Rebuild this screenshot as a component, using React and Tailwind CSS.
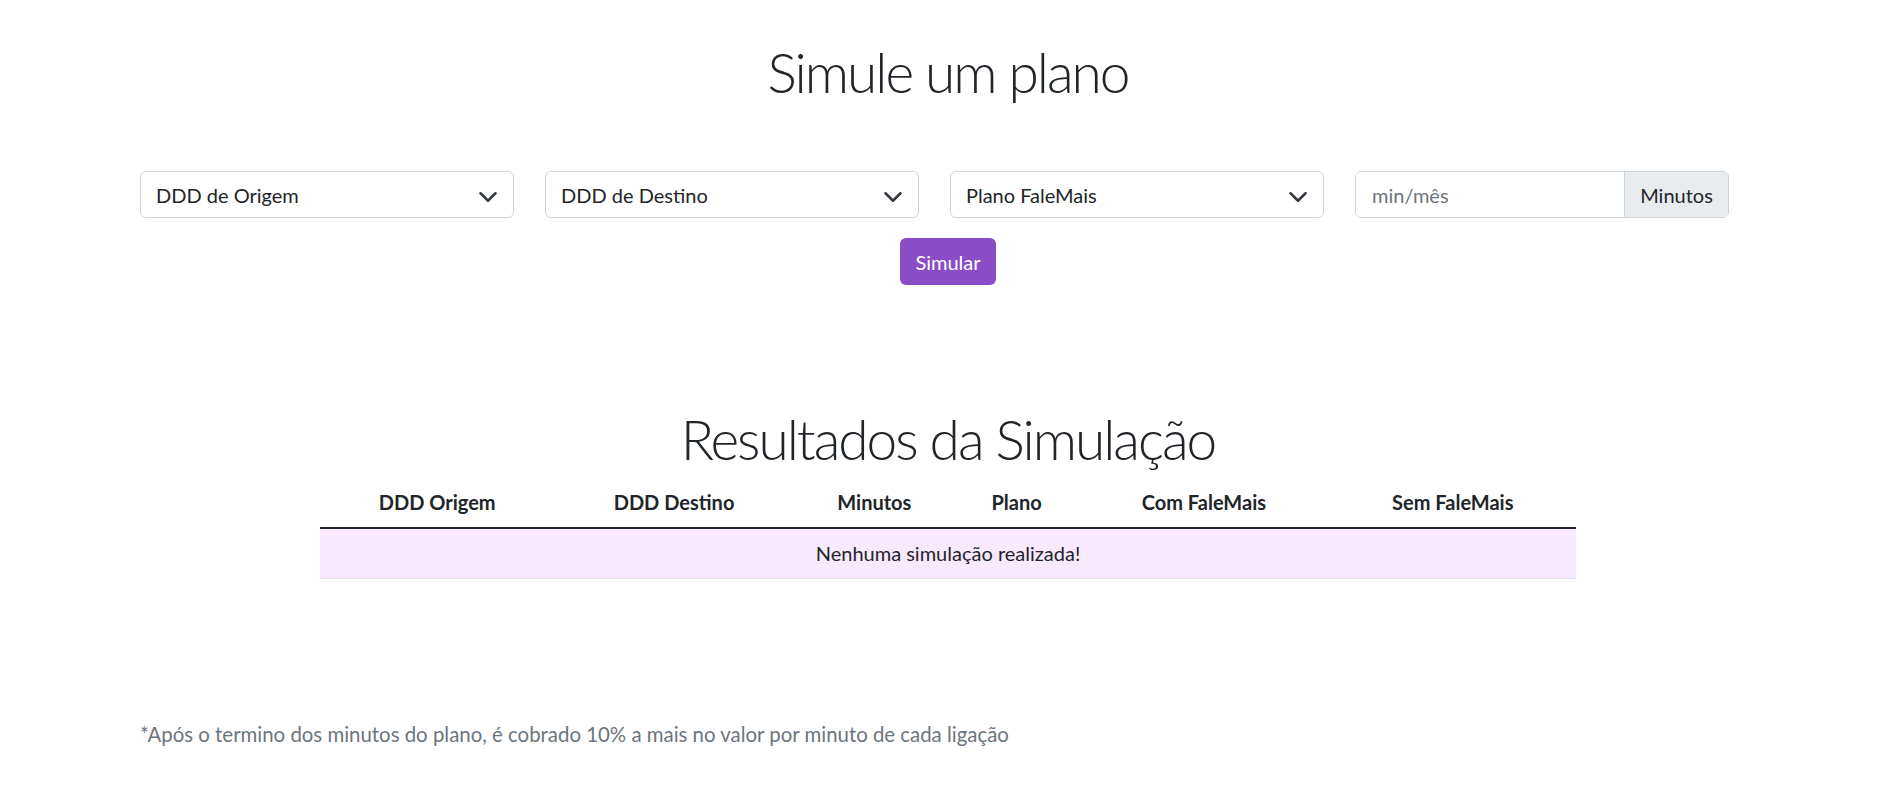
import React from 'react';

const font = { fontFamily: 'Lato, "Open Sans", sans-serif' };

const Chevron = () => (
  <svg width="20" height="15" viewBox="0 0 16 12" fill="none" className="shrink-0">
    <path d="m2 5 6 6 6-6" stroke="#343a40" strokeWidth="2" strokeLinecap="round" strokeLinejoin="round" />
  </svg>
);

const FakeSelect = ({ label }) => (
  <div className="h-[47px] flex items-center justify-between border border-[#ced4da] rounded-[6px] bg-white pl-[15px] pr-[15px] text-[20px] text-[#212529]">
    <span>{label}</span>
    <Chevron />
  </div>
);

const headers = ['DDD Origem', 'DDD Destino', 'Minutos', 'Plano', 'Com FaleMais', 'Sem FaleMais'];
const widths = ['w-[234px]', 'w-[239px]', 'w-[161px]', 'w-[123px]', 'w-[251px]', 'w-[246px]'];

const App = () => {
  return (
    <div className="min-h-screen bg-white text-[#212529]" style={font}>
      <div className="ml-[140px] w-[1616px] pt-[36px] pb-[40px]">
        <h1 className="text-center text-[55px] font-light leading-[72px] tracking-[-2px] text-[#212529]">Simule um plano</h1>

        <div className="mt-[63px] grid grid-cols-[repeat(4,374px)] gap-x-[31px]">
          <FakeSelect label="DDD de Origem" />
          <FakeSelect label="DDD de Destino" />
          <FakeSelect label="Plano FaleMais" />
          <div className="h-[47px] flex border border-[#ced4da] rounded-[6px] overflow-hidden text-[20px]">
            <div className="flex-1 flex items-center pl-[16px] text-[#6c757d] bg-white">min/mês</div>
            <div className="w-[104px] flex items-center justify-center bg-[#e9ecef] border-l border-[#ced4da] text-[#212529]">Minutos</div>
          </div>
        </div>

        <div className="mt-[20px] flex justify-center">
          <button className="h-[47px] px-[15px] rounded-[6px] bg-[#8a4dc5] text-white text-[20px]">Simular</button>
        </div>

        <h2 className="mt-[118px] text-center text-[55px] font-light leading-[72px] tracking-[-2px] text-[#212529]">Resultados da Simulação</h2>

        <table className="mx-auto mt-[2px] w-[1256px] border-collapse text-[20px]">
          <thead>
            <tr className="border-b-2 border-[#212529]">
              {headers.map((h, i) => (
                <th key={h} className={`${widths[i]} py-[10px] font-bold text-center`}>{h}</th>
              ))}
            </tr>
          </thead>
          <tbody>
            <tr className="bg-[#f9e9fe] border-b border-[#dee2e6]">
              <td colSpan={6} className="h-[50px] text-center">Nenhuma simulação realizada!</td>
            </tr>
          </tbody>
        </table>

        <p className="mt-[140px] text-[20.4px] text-[#6c757d]">
          *Após o termino dos minutos do plano, é cobrado 10% a mais no valor por minuto de cada ligação
        </p>
      </div>
    </div>
  );
};

export default App;
